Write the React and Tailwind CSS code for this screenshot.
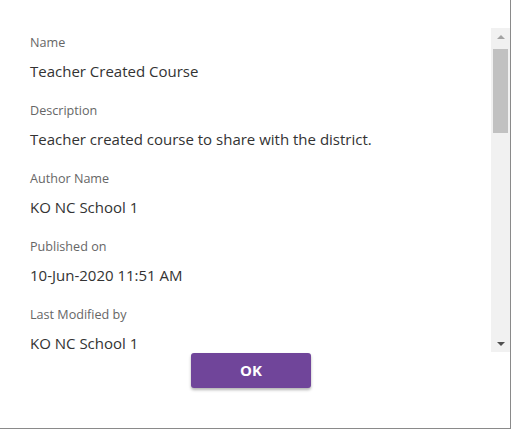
import React from 'react'

const fields = [
  { label: 'Name', value: 'Teacher Created Course' },
  { label: 'Description', value: 'Teacher created course to share with the district.' },
  { label: 'Author Name', value: 'KO NC School 1' },
  { label: 'Published on', value: '10-Jun-2020 11:51 AM' },
  { label: 'Last Modified by', value: 'KO NC School 1' },
]

const App = () => {
  return (
    <div
      className="w-[511px] h-[429px] bg-white border-r border-b border-[#8a8a8a] flex flex-col"
      style={{ fontFamily: '"Open Sans", "Liberation Sans", sans-serif' }}
    >
      <div className="mt-[28px] h-[324px] flex">
        <div className="flex-1 overflow-hidden pl-[30px] pt-[7px]">
          {fields.map((f) => (
            <div key={f.label} className="h-[68px]">
              <div className="h-[16px] leading-[16px] text-[12.6px] text-[#666666]">{f.label}</div>
              <div className="mt-[10px] h-[20px] leading-[20px] text-[15px] text-[#333333]">{f.value}</div>
            </div>
          ))}
        </div>
        <div className="w-[19px] bg-[#f1f1f1] flex flex-col">
          <div className="h-[17px] flex items-center justify-center">
            <div className="w-0 h-0 border-l-[4px] border-r-[4px] border-b-[4px] border-l-transparent border-r-transparent border-b-[#a3a3a3]" />
          </div>
          <div className="mt-[4px] mx-[2px] h-[84px] bg-[#c1c1c1]" />
          <div className="flex-1" />
          <div className="h-[17px] flex items-center justify-center">
            <div className="w-0 h-0 border-l-[4px] border-r-[4px] border-t-[4px] border-l-transparent border-r-transparent border-t-[#505050]" />
          </div>
        </div>
      </div>
      <div className="mt-[1px] pl-[191px]">
        <button className="w-[120px] h-[35px] rounded-[3px] bg-[#70459a] text-white text-[15px] font-bold shadow-[0_2px_3px_rgba(0,0,0,0.3)]">
          OK
        </button>
      </div>
    </div>
  )
}

export default App
